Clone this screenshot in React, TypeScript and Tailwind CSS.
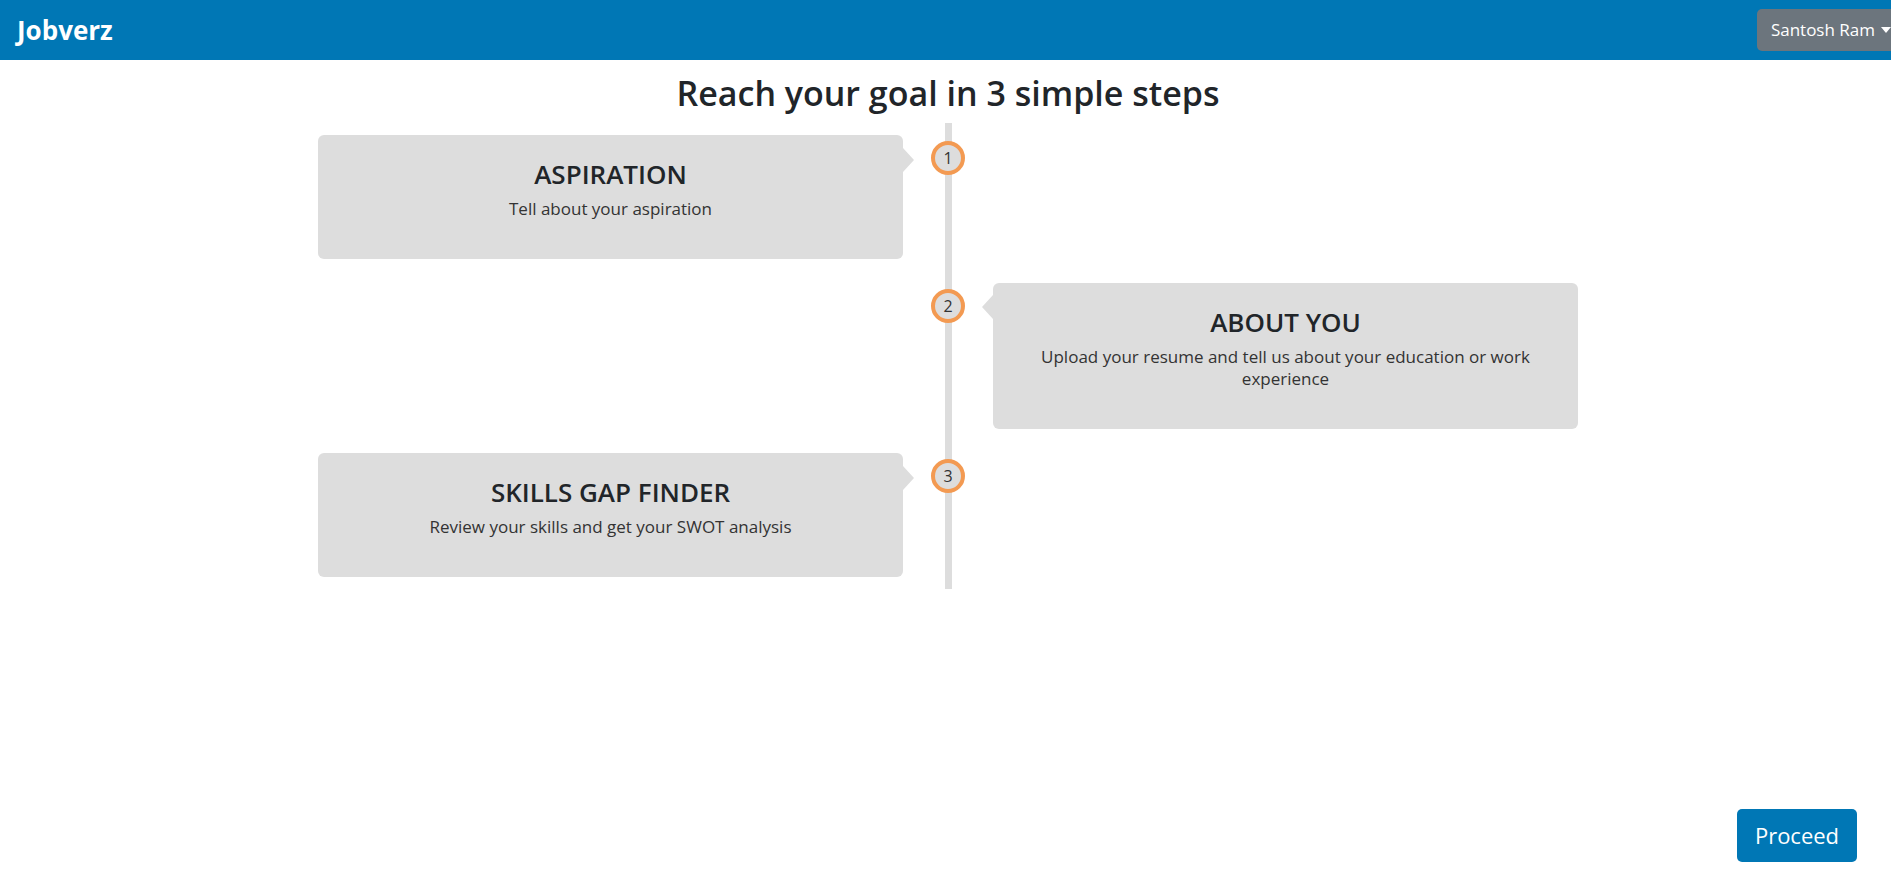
import React from 'react'

interface Step {
  num: number
  title: string
  text: string
  side: 'left' | 'right'
}

const steps: Step[] = [
  { num: 1, title: 'ASPIRATION', text: 'Tell about your aspiration', side: 'left' },
  {
    num: 2,
    title: 'ABOUT YOU',
    text: 'Upload your resume and tell us about your education or work experience',
    side: 'right',
  },
  { num: 3, title: 'SKILLS GAP FINDER', text: 'Review your skills and get your SWOT analysis', side: 'left' },
]

function StepCard({ step }: { step: Step }) {
  return (
    <div className="relative rounded-[6px] bg-[#dddddd] px-[30px] pt-[24px] pb-[39px] text-center">
      {step.side === 'left' ? (
        <span className="absolute left-full top-[13px] h-0 w-0 border-y-[12px] border-l-[11px] border-y-transparent border-l-[#dddddd]" />
      ) : (
        <span className="absolute right-full top-[12px] h-0 w-0 border-y-[12px] border-r-[11px] border-y-transparent border-r-[#dddddd]" />
      )}
      <h3 className="mb-2 text-[26px] leading-[1.2] font-semibold text-[#212529]">{step.title}</h3>
      <p className="text-[17px] leading-[22px] text-[#333333]">{step.text}</p>
    </div>
  )
}

function StepRow({ step }: { step: Step }) {
  return (
    <div className="grid grid-cols-[585px_90px_585px]">
      <div className="py-[12px]">{step.side === 'left' && <StepCard step={step} />}</div>
      <div className="flex justify-center">
        {/* timeline segment */}
        <div className="flex w-[7px] flex-col items-center bg-[#dddddd] pt-[18px]">
          <div className="flex h-[34px] w-[34px] shrink-0 items-center justify-center rounded-full border-[4px] border-[#f39a52] bg-[#dddddd] text-[16px] text-[#333333]">
            {step.num}
          </div>
        </div>
      </div>
      <div className="py-[12px]">{step.side === 'right' && <StepCard step={step} />}</div>
    </div>
  )
}

export default function App() {
  return (
    <div className="flex h-[872px] flex-col overflow-hidden bg-white font-['Open_Sans',sans-serif] text-[#212529]">
      <header className="flex h-[60px] shrink-0 items-center justify-between overflow-hidden bg-[#0077b5] pl-[17px]">
        <span className="text-[26px] font-bold text-white">Jobverz</span>
        <button className="-mr-[14px] flex h-[42px] items-center gap-[6px] rounded-[5px] bg-[#6c757d] px-[14px] text-[17px] text-white">
          Santosh Ram
          <span className="h-0 w-0 border-x-[5px] border-t-[6px] border-x-transparent border-t-white" />
        </button>
      </header>

      <main className="flex flex-col items-center pl-[5px]">
        <h2 className="mt-[13px] text-[34px] leading-[1.2] font-semibold text-[#212529]">
          Reach your goal in 3 simple steps
        </h2>
        <div className="mt-[9px] flex flex-col">
          {steps.map(step => (
            <StepRow key={step.num} step={step} />
          ))}
        </div>
      </main>

      <div className="mt-auto flex justify-end pr-[34px] pb-[10px]">
        <button className="h-[53px] w-[120px] rounded-[5px] bg-[#0077b5] text-[22px] text-white">Proceed</button>
      </div>
    </div>
  )
}
